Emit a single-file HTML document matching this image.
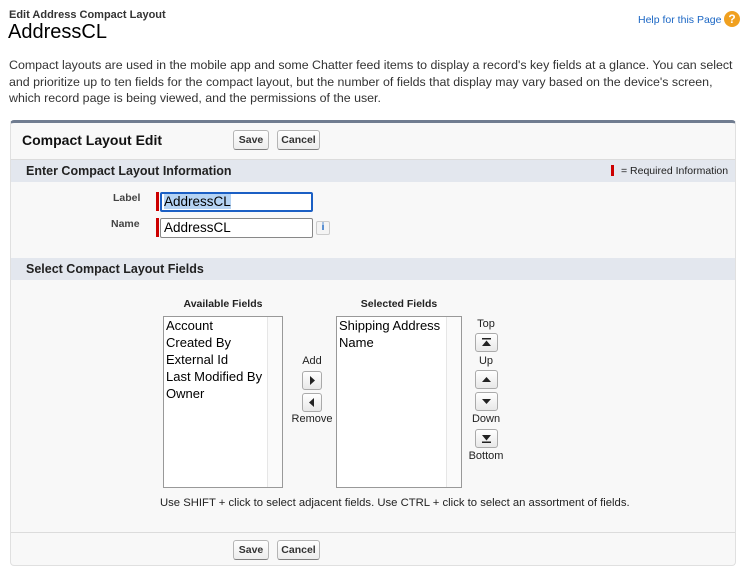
<!DOCTYPE html>
<html><head><meta charset="utf-8"><style>
*{box-sizing:border-box;margin:0;padding:0}
body{width:746px;height:571px;background:#fff;font-family:"Liberation Sans",Arial,sans-serif;color:#000;position:relative;overflow:hidden}
.a{position:absolute;white-space:nowrap}
.btn{position:absolute;border:1px solid #b5b5b5;border-bottom-color:#7f7f7f;border-radius:3px;background:linear-gradient(#fff,#ededed);font-size:10.5px;font-weight:bold;color:#333;text-align:center;line-height:18px}
.sec{position:absolute;left:11px;width:724px;background:#e3e7ee;font-size:12.5px;font-weight:bold;color:#222;padding-left:15px;line-height:22px}
.inp{position:absolute;border:1px solid #888;background:#fff;font-size:13.5px;padding-left:3px;line-height:18px}
.req{position:absolute;width:3px;background:#c00}
.list{position:absolute;border:1px solid #999;background:#fff;font-size:13px;line-height:17px;padding:0 0 0 2px}
.list .sb{position:absolute;right:0;top:0;bottom:0;width:15px;border-left:1px solid #e6e6e6;background:#fafafa}
.sm{position:absolute;font-size:11px;color:#222;text-align:center}
.ib{position:absolute;width:20px;height:19px;border:1px solid #aaa;border-radius:3px;background:linear-gradient(#fff,#e8e8e8)}
</style></head><body>
<div class="a" style="left:9px;top:9px;font-size:11px;font-weight:bold;color:#333">Edit Address Compact Layout</div>
<div class="a" style="left:8px;top:21px;font-size:20px;color:#000">AddressCL</div>
<div class="a" style="left:638px;top:14px;font-size:10.5px;color:#1a66c4">Help for this Page</div>
<div class="a" style="left:724px;top:11px;width:16px;height:16px;border-radius:50%;background:#f0a020;color:#fff;font-size:12px;font-weight:bold;text-align:center;line-height:16px">?</div>
<div class="a" style="left:9px;top:57px;font-size:12.4px;line-height:16.5px;color:#333;white-space:normal;width:735px">Compact layouts are used in the mobile app and some Chatter feed items to display a record's key fields at a glance. You can select and prioritize up to ten fields for the compact layout, but the number of fields that display may vary based on the device's screen, which record page is being viewed, and the permissions of the user.</div>

<div class="a" style="left:10px;top:120px;width:726px;height:446px;background:#f8f8f8;border:1px solid #e0e0e0;border-top:3px solid #707c90;border-radius:4px 4px 4px 4px"></div>
<div class="a" style="left:22px;top:132px;font-size:14px;font-weight:bold;color:#111">Compact Layout Edit</div>
<div class="btn" style="left:233px;top:130px;width:36px;height:20px">Save</div>
<div class="btn" style="left:277px;top:130px;width:43px;height:20px">Cancel</div>

<div class="sec" style="top:159px;border-top:1px solid #dcdcdc">Enter Compact Layout Information</div>
<div class="req" style="left:611px;top:165px;height:11px"></div>
<div class="a" style="left:621px;top:165px;font-size:10.5px;color:#222">= Required Information</div>

<div class="a" style="left:113px;top:192px;font-size:10.5px;font-weight:bold;color:#444">Label</div>
<div class="req" style="left:156px;top:192px;height:19px"></div>
<div class="inp" style="left:160px;top:192px;width:153px;height:20px;border:2px solid #1b5fc4;border-radius:2px;line-height:16px;padding-left:2px"><span style="background:#b5d3f3">AddressCL</span></div>
<div class="a" style="left:111px;top:218px;font-size:10.5px;font-weight:bold;color:#444">Name</div>
<div class="req" style="left:156px;top:218px;height:19px"></div>
<div class="inp" style="left:160px;top:218px;width:153px;height:20px;border-radius:2px">AddressCL</div>
<div class="a" style="left:316px;top:221px;width:14px;height:14px;border:1px solid #ccc;border-radius:2px;background:#f4f4f4;font-size:10px;color:#1a66c4;text-align:center;line-height:12px;font-weight:bold">i</div>

<div class="sec" style="top:258px">Select Compact Layout Fields</div>

<div class="a" style="left:163px;top:298px;width:120px;text-align:center;font-size:10.5px;font-weight:bold;color:#222">Available Fields</div>
<div class="a" style="left:336px;top:298px;width:126px;text-align:center;font-size:10.5px;font-weight:bold;color:#222">Selected Fields</div>
<div class="list" style="left:163px;top:316px;width:120px;height:172px">Account<br>Created By<br>External Id<br>Last Modified By<br>Owner<div class="sb"></div></div>
<div class="list" style="left:336px;top:316px;width:126px;height:172px">Shipping Address<br>Name<div class="sb"></div></div>

<div class="sm" style="left:292px;top:355px;width:40px">Add</div>
<div class="ib" style="left:302px;top:371px"><svg width="18" height="17"><path d="M7 4 L12 8.5 L7 13Z" fill="#222"/></svg></div>
<div class="ib" style="left:302px;top:393px"><svg width="18" height="17"><path d="M11 4 L6 8.5 L11 13Z" fill="#222"/></svg></div>
<div class="sm" style="left:286px;top:413px;width:52px">Remove</div>

<div class="sm" style="left:466px;top:318px;width:40px">Top</div>
<div class="ib" style="left:475px;top:333px;width:23px"><svg width="21" height="17"><rect x="6" y="4" width="9" height="1.5" fill="#222"/><path d="M6 12 L10.5 6.5 L15 12Z" fill="#222"/></svg></div>
<div class="sm" style="left:466px;top:355px;width:40px">Up</div>
<div class="ib" style="left:475px;top:370px;width:23px"><svg width="21" height="17"><path d="M6 11 L10.5 6 L15 11Z" fill="#222"/></svg></div>
<div class="ib" style="left:475px;top:392px;width:23px"><svg width="21" height="17"><path d="M6 6 L10.5 11 L15 6Z" fill="#222"/></svg></div>
<div class="sm" style="left:466px;top:413px;width:40px">Down</div>
<div class="ib" style="left:475px;top:429px;width:23px"><svg width="21" height="17"><path d="M6 5 L10.5 10.5 L15 5Z" fill="#222"/><rect x="6" y="11.5" width="9" height="1.5" fill="#222"/></svg></div>
<div class="sm" style="left:464px;top:450px;width:44px">Bottom</div>

<div class="a" style="left:160px;top:497px;font-size:11.3px;color:#222">Use SHIFT + click to select adjacent fields. Use CTRL + click to select an assortment of fields.</div>
<div class="a" style="left:11px;top:532px;width:724px;height:1px;background:#dcdcdc"></div>
<div class="btn" style="left:233px;top:540px;width:36px;height:20px">Save</div>
<div class="btn" style="left:277px;top:540px;width:43px;height:20px">Cancel</div>
</body></html>
